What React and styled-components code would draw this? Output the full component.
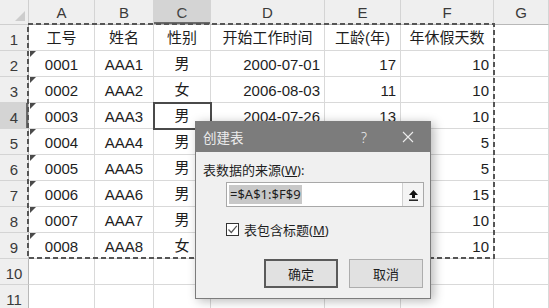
import React from 'react';
import styled, { createGlobalStyle, css } from 'styled-components';

const GlobalStyle = createGlobalStyle`
  html, body { margin: 0; padding: 0; background: #fff; }
  * { box-sizing: border-box; }
`;

const CELL_FONT = `"Liberation Sans", "Noto Sans CJK SC", sans-serif`;
const UI_FONT = `"Noto Sans", "Noto Sans CJK SC", sans-serif`;

const Screen = styled.div`
  position: relative;
  width: 549px;
  height: 308px;
  overflow: hidden;
  background: #fff;
`;

const Sheet = styled.div`
  display: grid;
  grid-template-columns: 29px 66px 59px 57px 114px 76px 93px 1fr;
  grid-template-rows: 25px repeat(12, 26px);
  font-family: ${CELL_FONT};
`;

const Corner = styled.div`
  position: relative;
  background: #efefef;
  border-right: 1px solid #cfcfcf;
  border-bottom: 1px solid #cfcfcf;
  &::after {
    content: '';
    position: absolute;
    right: 3px;
    bottom: 3px;
    border-style: solid;
    border-width: 0 0 10px 10px;
    border-color: transparent transparent #cdcdcd transparent;
  }
`;

const ColHead = styled.div`
  display: flex;
  align-items: center;
  justify-content: center;
  background: #efefef;
  color: #3a3a3a;
  font-size: 15px;
  border-right: 1px solid #d4d4d4;
  border-bottom: 1px solid #b8b8b8;
  ${(p) =>
    p.$active &&
    css`
      background: #d4d4d4;
      color: #444;
      box-shadow: inset 0 -2px 0 #6a6a6a;
    `}
`;

const RowHead = styled.div`
  display: flex;
  align-items: flex-end;
  justify-content: center;
  padding-bottom: 2px;
  background: #efefef;
  color: #3a3a3a;
  font-size: 15px;
  border-right: 1px solid #b8b8b8;
  border-bottom: 1px solid #d4d4d4;
  ${(p) =>
    p.$active &&
    css`
      background: #d4d4d4;
      box-shadow: inset -2px 0 0 #6a6a6a;
    `}
`;

const Cell = styled.div`
  position: relative;
  display: flex;
  align-items: flex-end;
  justify-content: ${(p) => (p.$right ? 'flex-end' : 'center')};
  padding: 0 4px 3px;
  font-size: 15px;
  color: #1e1e1e;
  white-space: nowrap;
  overflow: hidden;
  border-right: 1px solid #d9d9d9;
  border-bottom: 1px solid #d9d9d9;
  ${(p) =>
    p.$flag &&
    css`
      &::before {
        content: '';
        position: absolute;
        left: 1px;
        top: 0;
        border-style: solid;
        border-width: 6px 6px 0 0;
        border-color: #4a4a4a transparent transparent transparent;
      }
    `}
  ${(p) =>
    p.$active &&
    css`
      overflow: visible;
      z-index: 1;
      outline: 2px solid #4a4a4a;
      outline-offset: -1px;
    `}
`;

const Marquee = styled.svg`
  position: absolute;
  left: 27px;
  top: 23px;
  pointer-events: none;
  z-index: 2;
`;

const Dialog = styled.div`
  position: absolute;
  left: 195px;
  top: 121px;
  width: 236px;
  height: 178px;
  display: flex;
  flex-direction: column;
  background: #f0f0f0;
  border: 1px solid #7c7c7c;
  box-shadow: 3px 2px 10px rgba(0, 0, 0, 0.28);
  font-family: ${UI_FONT};
  font-size: 13px;
  color: #1e1e1e;
  z-index: 3;
`;

const TitleBar = styled.div`
  display: flex;
  align-items: center;
  height: 30px;
  padding: 0 0 0 7px;
  background: #7c7c7c;
  color: #ececec;
  font-size: 13.5px;
`;

const Title = styled.span`
  flex: 1;
`;

const TitleBtn = styled.span`
  width: 44px;
  display: flex;
  align-items: center;
  justify-content: center;
  font-size: 14px;
  font-weight: 300;
`;

const Body = styled.div`
  display: flex;
  flex-direction: column;
  padding: 0 7px;
`;

const Label = styled.div`
  margin-top: 9px;
  height: 18px;
  line-height: 18px;
`;

const RefBox = styled.div`
  display: flex;
  margin: 3px 0 0 23px;
  width: 198px;
  height: 25px;
  border: 1px solid #a8a8a8;
  background: #fff;
`;

const RefInput = styled.div`
  flex: 1;
  display: flex;
  align-items: center;
  padding-left: 2px;
`;

const Selected = styled.span`
  background: #c8c8c8;
  line-height: 19px;
  padding: 0 1px;
`;

const RefButton = styled.div`
  width: 21px;
  display: flex;
  align-items: center;
  justify-content: center;
  background: #f4f4f4;
  border-left: 1px solid #d0d0d0;
`;

const CheckRow = styled.div`
  display: flex;
  align-items: center;
  gap: 5px;
  margin: 13px 0 0 23px;
  height: 18px;
`;

const Box = styled.span`
  width: 13px;
  height: 13px;
  display: flex;
  align-items: center;
  justify-content: center;
  border: 1px solid #333;
  background: #fff;
`;

const Buttons = styled.div`
  display: flex;
  justify-content: flex-end;
  gap: 11px;
  margin-top: 21px;
`;

const Button = styled.div`
  width: 74px;
  height: 29px;
  display: flex;
  align-items: center;
  justify-content: center;
  background: #e1e1e1;
  border: ${(p) => (p.$primary ? '2px solid #5a5a5a' : '1px solid #adadad')};
`;

const U = styled.span`
  text-decoration: underline;
`;

const cols = ['A', 'B', 'C', 'D', 'E', 'F', 'G'];

const data = [
  ['工号', '姓名', '性别', '开始工作时间', '工龄(年)', '年休假天数'],
  ['0001', 'AAA1', '男', '2000-07-01', '17', '10'],
  ['0002', 'AAA2', '女', '2006-08-03', '11', '10'],
  ['0003', 'AAA3', '男', '2004-07-26', '13', '10'],
  ['0004', 'AAA4', '男', '2012-03-15', '5', '5'],
  ['0005', 'AAA5', '男', '2011-09-01', '6', '5'],
  ['0006', 'AAA6', '男', '1995-06-20', '22', '15'],
  ['0007', 'AAA7', '男', '2003-04-11', '14', '10'],
  ['0008', 'AAA8', '女', '2005-10-09', '12', '10'],
];

const ActiveRow = 4;
const ActiveCol = 2;

function UploadIcon() {
  return (
    <svg width="11" height="12" viewBox="0 0 11 12">
      <path d="M5.5 1 L10 6 H7 V9 H4 V6 H1 Z" fill="#111" />
      <rect x="1" y="10.5" width="9" height="1.4" fill="#111" />
    </svg>
  );
}

function CloseIcon() {
  return (
    <svg width="12" height="12" viewBox="0 0 12 12">
      <path d="M1 1 L11 11 M11 1 L1 11" stroke="#ececec" strokeWidth="1.1" />
    </svg>
  );
}

function CheckMark() {
  return (
    <svg width="11" height="11" viewBox="0 0 11 11">
      <path d="M1.5 5.5 L4.3 8.5 L9.8 1.8" fill="none" stroke="#555" strokeWidth="1.2" />
    </svg>
  );
}

export default function App() {
  const rows = [];
  for (let r = 1; r <= 12; r++) {
    const values = data[r - 1] || [];
    rows.push(
      <RowHead key={`h${r}`} $active={r === ActiveRow}>
        {r}
      </RowHead>
    );
    cols.forEach((c, ci) => {
      const v = values[ci] || '';
      rows.push(
        <Cell
          key={`${c}${r}`}
          $right={r > 1 && ci >= 3}
          $flag={ci === 0 && r >= 2 && r <= 9}
          $active={r === ActiveRow && ci === ActiveCol}
        >
          {v}
        </Cell>
      );
    });
  }

  return (
    <Screen>
      <GlobalStyle />
      <Sheet>
        <Corner />
        {cols.map((c, i) => (
          <ColHead key={c} $active={i === ActiveCol}>
            {c}
          </ColHead>
        ))}
        {rows}
      </Sheet>

      <Marquee width="468" height="237">
        <rect
          x="1"
          y="1"
          width="466"
          height="234"
          fill="none"
          stroke="#555"
          strokeWidth="2"
          strokeDasharray="5 3"
        />
      </Marquee>

      <Dialog>
        <TitleBar>
          <Title>创建表</Title>
          <TitleBtn>?</TitleBtn>
          <TitleBtn>
            <CloseIcon />
          </TitleBtn>
        </TitleBar>
        <Body>
          <Label>
            表数据的来源(<U>W</U>):
          </Label>
          <RefBox>
            <RefInput>
              <Selected>=$A$1:$F$9</Selected>
            </RefInput>
            <RefButton>
              <UploadIcon />
            </RefButton>
          </RefBox>
          <CheckRow>
            <Box>
              <CheckMark />
            </Box>
            <span>
              表包含标题(<U>M</U>)
            </span>
          </CheckRow>
          <Buttons>
            <Button $primary>确定</Button>
            <Button>取消</Button>
          </Buttons>
        </Body>
      </Dialog>
    </Screen>
  );
}
